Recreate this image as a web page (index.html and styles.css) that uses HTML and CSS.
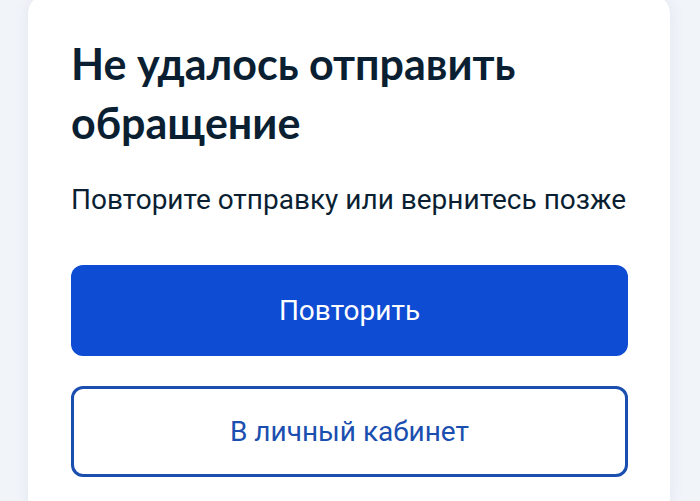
FILE: index.html
```html
<!DOCTYPE html>
<html lang="ru">
<head>
<meta charset="utf-8">
<title>Не удалось отправить обращение</title>
<link rel="stylesheet" href="styles.css">
</head>
<body>
<main class="page">
  <section class="card">
    <h1 class="title">Не удалось отправить обращение</h1>
    <p class="subtitle">Повторите отправку или вернитесь позже</p>
    <div class="actions">
      <button class="btn btn-primary" type="button">Повторить</button>
      <button class="btn btn-secondary" type="button">В личный кабинет</button>
    </div>
  </section>
</main>
</body>
</html>
```

FILE: styles.css
```css
html, body {
  margin: 0;
  padding: 0;
}
body {
  background: #f1f4f9;
  width: 700px;
  height: 501px;
  overflow: hidden;
}
.page {
  padding: 0 30px 0 28px;
}
.card {
  margin-top: -6px;
  background: #ffffff;
  border-radius: 20px;
  box-shadow: 0 0 14px rgba(120, 140, 180, 0.12);
  padding: 40px 42px 40px 43px;
}
.title {
  margin: 0;
  font-family: "Lato", "Noto Sans", sans-serif;
  font-weight: 700;
  font-size: 43px;
  line-height: 59px;
  color: #0b1f33;
  letter-spacing: 0;
}
.subtitle {
  margin: 30px 0 0;
  font-family: "Roboto", "Noto Sans", sans-serif;
  font-size: 28px;
  line-height: 36px;
  color: #0b1f33;
}
.actions {
  display: flex;
  flex-direction: column;
  gap: 30px;
  margin-top: 47px;
}
.btn {
  display: flex;
  align-items: center;
  justify-content: center;
  height: 91px;
  width: 100%;
  border-radius: 12px;
  font-family: "Roboto", "Noto Sans", sans-serif;
  font-size: 28px;
  cursor: pointer;
}
.btn-primary {
  background: #0d4cd3;
  color: #ffffff;
  border: none;
}
.btn-secondary {
  background: #ffffff;
  color: #1a4fb0;
  border: 3px solid #1a4fb0;
}
```
